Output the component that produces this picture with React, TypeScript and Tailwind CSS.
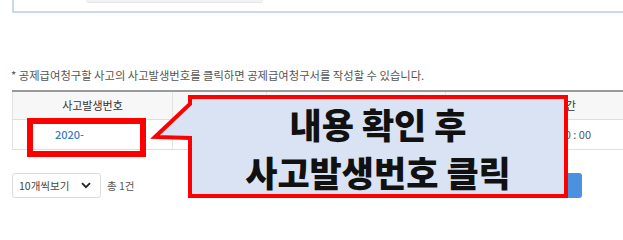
import React from "react";

export default function App() {
  return (
    <div className="relative w-[623px] h-[213px] overflow-hidden bg-white font-['Noto_Sans_CJK_KR','Noto_Sans',sans-serif]">
      {/* top search box remnant */}
      <div className="ml-[12px] h-[13px] border-l-2 border-b-2 border-[#c9d8f2]">
        <div className="ml-[72px] w-[177px] h-[3px] bg-[#f1f1f6] border-b border-[#e3e3ec] rounded-b-sm" />
      </div>

      {/* note */}
      <p className="mt-[54px] ml-[11px] h-[16px] text-[11.3px] leading-[16px] text-[#555] whitespace-nowrap">
        * 공제급여청구할 사고의 사고발생번호를 클릭하면 공제급여청구서를 작성할 수 있습니다.
      </p>

      {/* table */}
      <div className="mt-[7px] ml-[12px] w-[640px] border-t-2 border-[#9a9a9a]">
        <div className="grid grid-cols-[160px_94px_179px_200px] h-[28px] bg-[#f7f7f7] border-b border-[#dedede] text-[11px] text-[#333]">
          <div className="flex items-center justify-center border-l border-[#e3e3e3]">사고발생번호</div>
          <div className="border-l border-[#e3e3e3]" />
          <div className="border-l border-[#e3e3e3]" />
          <div className="flex items-center justify-center border-l border-[#e3e3e3]">사고발생시간</div>
        </div>
        <div className="grid grid-cols-[160px_94px_179px_200px] h-[30px] border-b border-[#dedede] text-[11px]">
          <div className="flex items-center pl-[42px] border-l border-[#e3e3e3] text-[#3b7cc4] font-medium">2020-</div>
          <div className="border-l border-[#e3e3e3]" />
          <div className="border-l border-[#e3e3e3]" />
          <div className="flex items-center justify-end pr-[54px] border-l border-[#e3e3e3] text-[#555]">10 : 00</div>
        </div>
      </div>

      {/* bottom row */}
      <div className="mt-[23px] ml-[12px] flex items-center h-[25px]">
        <div className="flex items-center justify-between w-[89px] h-[25px] pl-[6px] pr-[9px] border border-[#dcdcdc] rounded-[3px] text-[10.5px] text-[#444]">
          <span>10개씩보기</span>
          <svg width="10" height="7" viewBox="0 0 10 7">
            <path d="M1 1.2 L5 5.2 L9 1.2" fill="none" stroke="#222" strokeWidth="1.8" />
          </svg>
        </div>
        <span className="ml-[6px] text-[10.5px] text-[#555]">총 1건</span>
        <div className="ml-auto mr-[41px] w-[80px] h-[25px] rounded-[3px] bg-[#4a91e0]" />
      </div>

      {/* highlight rectangle */}
      <div className="absolute left-[27px] top-[118px] w-[119px] h-[39px] border-[6px] border-[#ff0000]" />

      {/* callout shape */}
      <svg className="absolute left-0 top-0" width="623" height="213" viewBox="0 0 623 213">
        <path
          d="M190 97 L566 97 L566 196 L190 196 L190 138 L155 137 L190 104 Z"
          fill="#dae3f3"
          stroke="#ff0000"
          strokeWidth="4"
          strokeLinejoin="miter"
        />
      </svg>
      <div className="absolute left-[192px] top-[100px] w-[372px] h-[96px] flex flex-col items-center justify-center text-[35px] leading-[48px] font-black text-[#111] whitespace-nowrap">
        <span>내용 확인 후</span>
        <span>사고발생번호 클릭</span>
      </div>
    </div>
  );
}
